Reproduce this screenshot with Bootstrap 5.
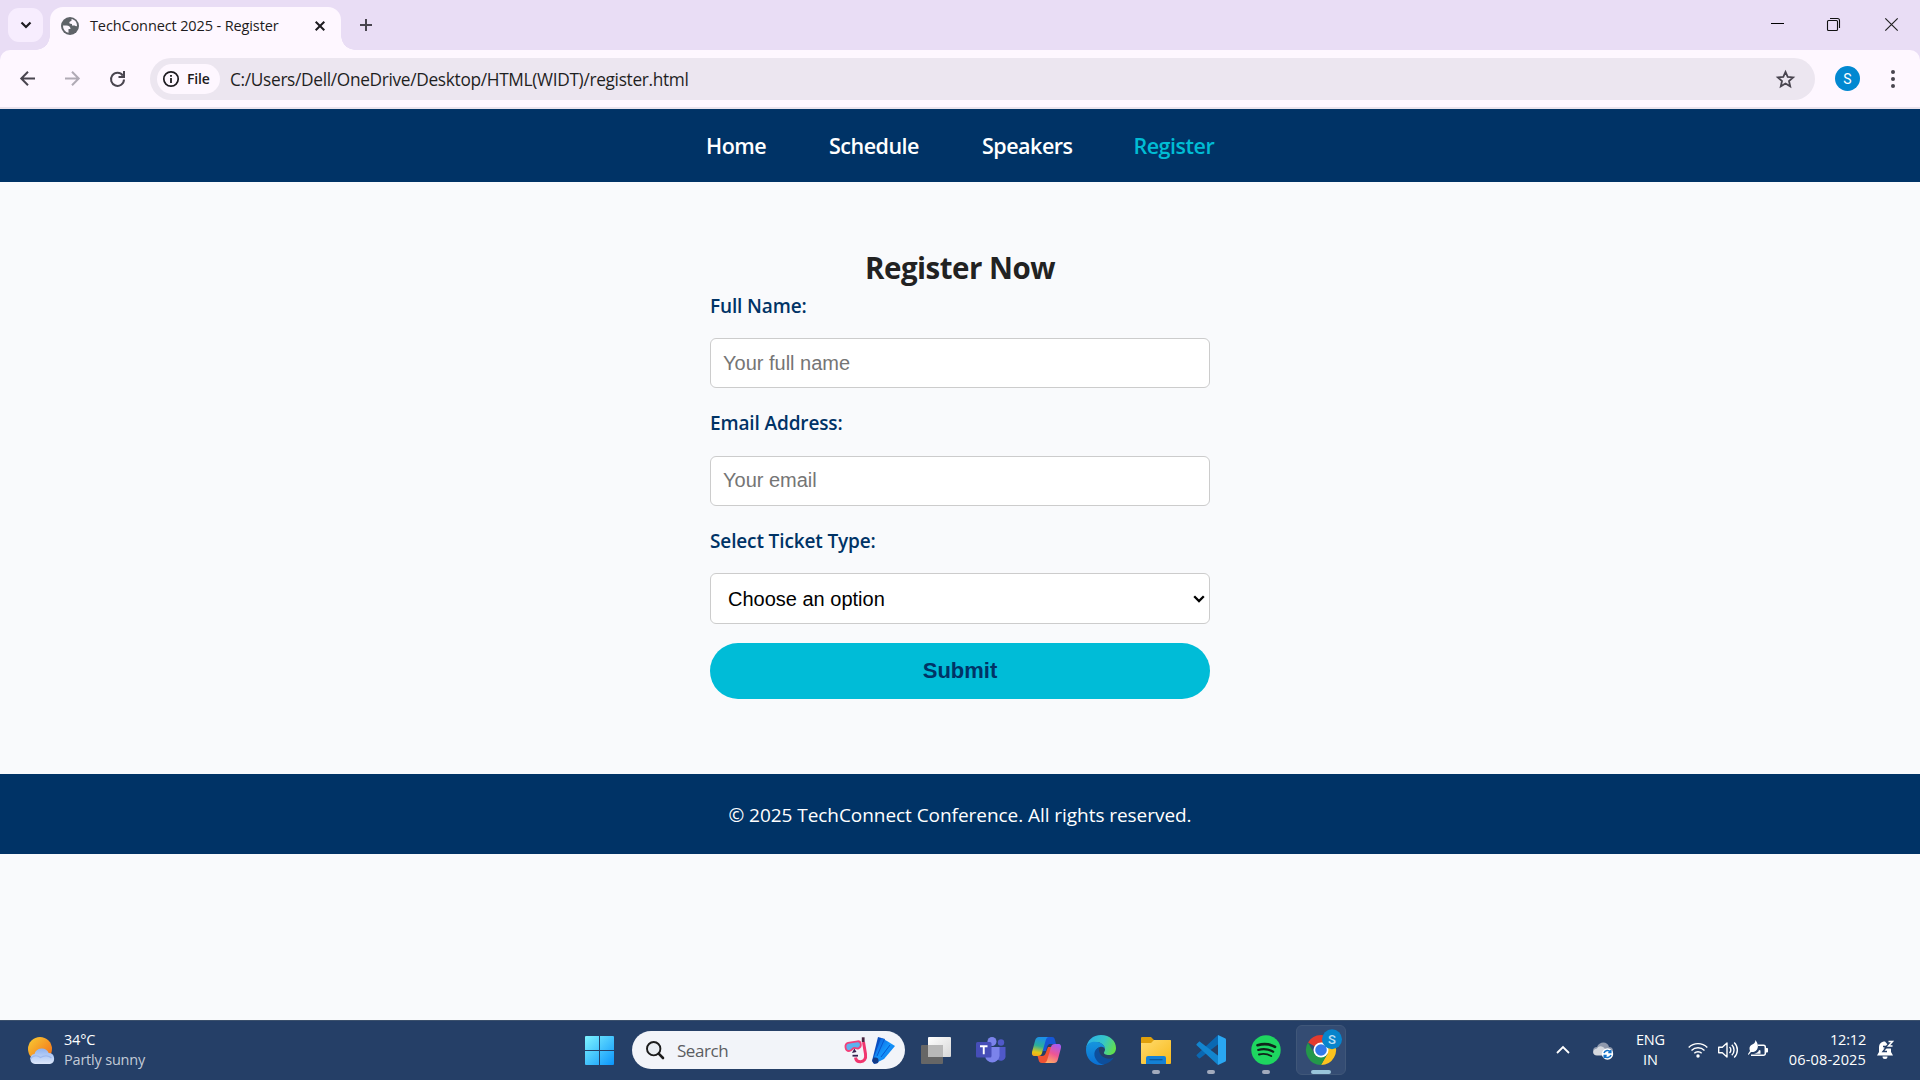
<!DOCTYPE html>
<html lang="en">
<head>
<meta charset="utf-8">
<title>TechConnect 2025 - Register</title>
<link href="https://cdn.jsdelivr.net/npm/bootstrap@5.3.0/dist/css/bootstrap.min.css" rel="stylesheet">
<style>
  html, body { height: 100%; overflow: hidden; }
  body { font-family: "Open Sans", "Noto Sans", sans-serif; background: #f9fafc; color: #222; width: 1920px; height: 1080px; }
  svg { display: block; flex: none; overflow: visible; }
  .fit { display: block; white-space: nowrap; flex: none; }

  /* browser frame */
  .tabstrip { height: 50px; background: #e9ddf5; }
  .tab-search { width: 35px; height: 34px; margin: 8px 0 0 8px; border-radius: 11px; background: #f7edfe; }
  .tab-active { width: 291px; height: 43px; margin: 7px 0 0 7px; padding: 0 16px 6px 11px; border-radius: 13px 13px 0 0; background: #fef7ff; position: relative; }
  .tab-active::before, .tab-active::after { content: ""; position: absolute; bottom: 0; width: 14px; height: 14px; }
  .tab-active::before { left: -14px; background: radial-gradient(circle at 0 0, transparent 13.5px, #fef7ff 14px); }
  .tab-active::after { right: -14px; background: radial-gradient(circle at 100% 0, transparent 13.5px, #fef7ff 14px); }
  .tab-title { font-size: 14.5px; letter-spacing: -.12px; color: #1d1b20; margin-left: 11px; }
  .new-tab { margin: 19px 0 0 19px; }
  .win-controls { margin: 18px 22px 0 auto; gap: 43px; }
  .toolbar-wrap { background: #e9ddf5; }
  .toolbar { height: 59px; background: #fef7ff; border-bottom: 2px solid #e9e2ec; border-radius: 10px 10px 0 0; padding: 0 22px 0 20px; }
  .tool-gap { margin-left: 30px; }
  .omnibox { width: 1665px; height: 42px; border-radius: 21px; background: #ece6f0; margin-left: 25px; padding: 0 20px 0 7px; }
  .chip { width: 63px; height: 30px; border-radius: 15px; background: #fef7ff; padding-left: 6px; gap: 8px; }
  .chip-text { font-size: 14px; font-weight: 600; letter-spacing: -.2px; color: #1d1b20; }
  .url { font-size: 17.3px; letter-spacing: -.32px; color: #1f1f1f; margin-left: 10px; padding-top: 2px; }
  .avatar { width: 25px; height: 25px; border-radius: 50%; background: #0288d1; color: #fff; font: 14px Roboto, sans-serif; margin-left: 20px; }
  .kebab { margin-right: 3.500px; }

  /* page */
  .site-nav { height: 73px; background: #003366; padding: 2px 0 0 706px; }
  .site-nav .fit { font-size: 21.5px; font-weight: 600; letter-spacing: -.5px; color: #fff; }
  .site-nav .current { color: #00bcd4; }
  .slot-1 { width: 123px; } .slot-2 { width: 153px; } .slot-3 { width: 151.500px; }
  .page-main { height: 592px; padding-top: 66px; }
  .title { font-size: 29.5px; line-height: 40px; font-weight: 700; letter-spacing: -.5px; color: #222; margin: 0; }
  .reg-form { width: 500px; margin-top: 3px; }
  .reg-form label { font-size: 19px; line-height: 30px; font-weight: 600; letter-spacing: -.13px; color: #003366; }
  .reg-form .form-control, .reg-form .form-select { font: 20px/23px "Liberation Sans", Arial, sans-serif; height: 50px; padding: 12px; border: 1px solid #ccc; border-radius: 6px; background-color: #fff; color: #000; }
  .reg-form .form-control::placeholder { color: #757575; }
  .reg-form .email-field { padding: 11px 12px 13px; }
  .reg-form .form-select { height: 51px; padding: 13px 17px 12px; background-image: url("data:image/svg+xml,%3Csvg xmlns='http://www.w3.org/2000/svg' viewBox='0 0 12 8'%3E%3Cpath d='M1.2 1.3 6 6.1l4.800-4.800' fill='none' stroke='%23000' stroke-width='2.300'/%3E%3C/svg%3E"); background-size: 12px 8px; background-position: right 4px top 21px; }
  .btn-submit { height: 56px; border: 0; border-radius: 28px; background: #00bcd7; color: #003366; font: bold 22px "Liberation Sans", Arial, sans-serif; }
  .f1 { margin-top: 17px; } .f1b { margin-top: 18px; } .f2 { margin-top: 20px; } .f3 { margin-top: 19px; }
  .site-footer { height: 80px; background: #003366; color: #fff; font-size: 19px; letter-spacing: -.05px; padding-top: 2px; }
  .blank { height: 166px; }

  /* taskbar */
  .taskbar { height: 60px; background: #253f67; border-top: 1px solid #3b506c; color: #fff; padding-bottom: 1px; }
  .taskbar .fit { font-size: 14.5px; line-height: 20px; letter-spacing: -.2px; }
  .weather { width: 573px; padding-left: 28px; gap: 9px; }
  .weather .muted { color: #c3cbd7; }
  .start { width: 59px; padding-left: 12px; }
  .search-pill { width: 273px; height: 38px; border-radius: 19px; background: #f2f4f9; padding: 0 10px 0 14px; }
  .search-pill .fit { font-size: 17px; letter-spacing: -.45px; color: #5b5d61; margin-left: 13px; padding-top: 2px; }
  .fins { margin-left: 4px; }
  .apps { margin-left: 3.500px; }
  .app-slot { width: 55px; height: 58px; position: relative; }
  .app-slot.open::after { content: ""; position: absolute; left: 23.500px; top: 49px; width: 8px; height: 4px; border-radius: 2px; background: #a2abbd; }
  .app-slot.focus::before { content: ""; position: absolute; left: 2.500px; top: 4px; width: 50px; height: 50px; border-radius: 6px; background: #344c73; border: 1px solid #405779; }
  .app-slot.focus::after { left: 17.500px; width: 20px; background: #99c5da; }
  .app-slot svg { position: relative; }
  .tray { margin-left: auto; padding-right: 26px; }
  .chev { margin-right: 23px; } .cloud { margin: 2px 23px 0 0; } .lang { margin-right: 23px; }
  .sig { margin-right: 10px; } .batt { margin: -3px 21px 0 0; } .clock { margin-right: 11px; }
  .taskbar .date { letter-spacing: .15px; }
</style>
<script src="https://cdn.jsdelivr.net/npm/bootstrap@5.3.0/dist/js/bootstrap.bundle.min.js"></script>
</head>
<body class="d-flex flex-column">

<div class="tabstrip d-flex align-items-start">
  <div class="tab-search d-flex align-items-center justify-content-center">
    <svg width="12" height="8" viewBox="0 0 12 8"><path d="M1.500 1.500 6 6l4.500-4.500" fill="none" stroke="#1d1b20" stroke-width="2.200"/></svg>
  </div>
  <div class="tab-active d-flex align-items-center">
    <svg width="18" height="18" viewBox="0 0 18 18"><circle cx="9" cy="9" r="9" fill="#5f6368"/><path fill="#fef7ff" d="M2 8.500h3.500c2.500 0 4 1.300 4 3.500H7.500v3.800A7 7 0 0 1 2 8.500zM10.500 2.100C14 2.800 16 5.500 16 8.700c-1.200 1.300-1.800-.2-3-.2H11V7C8.500 7 8 6 8.500 5c.4-1 2-.6 2-1.600z"/></svg>
    <span class="fit tab-title">TechConnect 2025 - Register</span>
    <svg class="ms-auto" width="10" height="10" viewBox="0 0 10 10"><path d="m.7.7 8.600 8.600M9.300.7.7 9.300" stroke="#1d1b20" stroke-width="2"/></svg>
  </div>
  <svg class="new-tab" width="12" height="12" viewBox="0 0 12 12"><path d="M6 0v12M0 6h12" stroke="#49454f" stroke-width="2"/></svg>
  <div class="win-controls d-flex">
    <svg width="13" height="13" viewBox="0 0 13 13"><path d="M0 5.500h13" stroke="#000"/></svg>
    <svg width="13" height="13" viewBox="0 0 13 13"><rect x=".5" y="2.500" width="10" height="10" rx="1" fill="none" stroke="#111" stroke-width="1.100"/><path d="M3 .5h7.500a2 2 0 0 1 2 2V10" fill="none" stroke="#111" stroke-width="1.100"/></svg>
    <svg width="15" height="13" viewBox="-2 0 15 13"><path d="m.3.3 12.400 12.400M12.700.3.3 12.700" stroke="#222" stroke-width="1.200"/></svg>
  </div>
</div>

<div class="toolbar-wrap">
  <div class="toolbar d-flex align-items-center">
    <svg width="15" height="15" viewBox="0 0 15 15"><path d="M15 7.500H1.500M8 .8 1.300 7.500 8 14.200" fill="none" stroke="#49454f" stroke-width="2"/></svg>
    <svg class="tool-gap" width="15" height="15" viewBox="0 0 15 15"><path d="M0 7.500h13.500M7 .8l6.700 6.700L7 14.200" fill="none" stroke="#b0abb5" stroke-width="2"/></svg>
    <svg class="tool-gap" width="15" height="15" viewBox="0 0 15 15"><path d="M12.800 4.600A6.500 6.500 0 1 0 14 8.500" fill="none" stroke="#49454f" stroke-width="2"/><path d="M14 0v6H8.500" fill="none" stroke="#49454f" stroke-width="2"/></svg>
    <div class="omnibox d-flex align-items-center">
      <div class="chip d-flex align-items-center">
        <svg width="16" height="16" viewBox="0 0 16 16"><circle cx="8" cy="8" r="7.200" fill="none" stroke="#1d1b20" stroke-width="1.700"/><path d="M8 7v5M8 4v1.800" stroke="#1d1b20" stroke-width="1.800"/></svg>
        <span class="fit chip-text">File</span>
      </div>
      <span class="fit url">C:/Users/Dell/OneDrive/Desktop/HTML(WIDT)/register.html</span>
      <svg class="ms-auto" width="19" height="18" viewBox="0 0 19 18"><path d="m9.500 1.900 2.200 5 5.400.5-4.100 3.600 1.200 5.300-4.700-2.800-4.700 2.800L6 11 1.900 7.400l5.400-.5z" fill="none" stroke="#49454f" stroke-width="1.800"/></svg>
    </div>
    <div class="avatar d-flex align-items-center justify-content-center">S</div>
    <svg class="ms-auto kebab" width="4" height="18" viewBox="0 0 4 18"><g fill="#49454f"><circle cx="2" cy="2" r="2"/><circle cx="2" cy="9" r="2"/><circle cx="2" cy="16" r="2"/></g></svg>
  </div>
</div>

<nav class="site-nav d-flex align-items-center">
  <div class="slot-1"><a class="fit text-decoration-none">Home</a></div>
  <div class="slot-2"><a class="fit text-decoration-none">Schedule</a></div>
  <div class="slot-3"><a class="fit text-decoration-none">Speakers</a></div>
  <a class="fit text-decoration-none current">Register</a>
</nav>

<main class="page-main d-flex flex-column align-items-center">
  <h2 class="title"><span class="fit">Register Now</span></h2>
  <form class="reg-form d-flex flex-column">
    <label class="d-flex" for="n"><span class="fit">Full Name:</span></label>
    <input id="n" class="form-control f1" placeholder="Your full name">
    <label class="d-flex f2" for="e"><span class="fit">Email Address:</span></label>
    <input id="e" class="form-control email-field f1b" placeholder="Your email">
    <label class="d-flex f2" for="t"><span class="fit">Select Ticket Type:</span></label>
    <select id="t" class="form-select f1"><option>Choose an option</option></select>
    <button type="button" class="btn-submit f3">Submit</button>
  </form>
</main>

<footer class="site-footer d-flex align-items-center justify-content-center"><span class="fit">© 2025 TechConnect Conference. All rights reserved.</span></footer>
<div class="blank"></div>

<div class="taskbar d-flex align-items-center">
  <div class="weather d-flex align-items-center">
    <svg width="27" height="27" viewBox="0 0 27 27">
      <defs><linearGradient id="sun" x1="0" y1="0" x2="1" y2="1"><stop offset=".1" stop-color="#f7c331"/><stop offset=".8" stop-color="#f47b1c"/></linearGradient><linearGradient id="cl" x1="0" y1="0" x2="0" y2="1"><stop offset="0" stop-color="#8fb2f0"/><stop offset="1" stop-color="#dde8fb"/></linearGradient></defs>
      <circle cx="12" cy="12" r="12" fill="url(#sun)"/>
      <path d="M7 27a5 5 0 0 1-.5-9.900A7.500 7.500 0 0 1 20.700 16 5.600 5.600 0 0 1 22 27z" fill="url(#cl)"/>
      <path d="M2.500 22c2-4 7-4 10-1.500 4-3 9-1.500 11 .5" fill="none" stroke="#9db9ee" stroke-width="1.200"/>
    </svg>
    <div><span class="fit">34°C</span><span class="fit muted">Partly sunny</span></div>
  </div>
  <div class="start">
    <svg width="29" height="29" viewBox="0 0 29 29"><defs><linearGradient id="win" gradientUnits="userSpaceOnUse" x1="0" y1="0" x2="29" y2="29"><stop offset="0" stop-color="#7ef3ff"/><stop offset="1" stop-color="#0b95fb"/></linearGradient></defs><path fill="url(#win)" d="M1 0h13v14H0V1a1 1 0 0 1 1-1zM15 0h13a1 1 0 0 1 1 1v13H15zM0 15h14v14H1a1 1 0 0 1-1-1zM15 15h14v13a1 1 0 0 1-1 1H15z"/></svg>
  </div>
  <div class="search-pill d-flex align-items-center">
    <svg width="18" height="18" viewBox="0 0 18 18"><circle cx="7.700" cy="7.700" r="6.700" fill="#e9edf2" stroke="#1c1c1c" stroke-width="1.900"/><path d="m12.700 12.700 4.300 4.300" stroke="#1c1c1c" stroke-width="2.600" stroke-linecap="round"/></svg>
    <span class="fit">Search</span>
    <svg class="ms-auto" width="24" height="27" viewBox="0 0 24 27"><path d="M19.500 5 21.500 17c.8 5-1.500 7.700-5 7.700-3 0-4.700-1.700-5-4.200" fill="none" stroke="#f0366f" stroke-width="3"/><path d="M19.200 .3v4.700" stroke="#4b2440" stroke-width="2.800"/><path d="M4 5.800 13.500 4.300c4-.4 4.500 5.700 1 7-2 .7-3-.6-4.500-.4C8.300 11.200 8 14 5 14 1 14 0 7 4 5.800z" fill="#5fb2ee" stroke="#f2407a" stroke-width="1.800"/><path d="m8 16 2.300-4.500L12.500 15z" fill="#372050"/><path d="M8.500 18.700h5.500" stroke="#372050" stroke-width="1.800"/></svg>
    <svg class="fins" width="23" height="27" viewBox="0 0 23 27"><defs><linearGradient id="fin" x1="0" y1="0" x2="1" y2="1"><stop offset="0" stop-color="#0a56d8"/><stop offset=".5" stop-color="#1595fa"/><stop offset="1" stop-color="#0873ea"/></linearGradient></defs><path fill="#0a4fc0" d="M6 0l7 2-7 24-4 1-2-3z"/><path fill="url(#fin)" d="M9 1l6 3 8 5-11 13-6 3-4-5z"/><path d="M12 3 5 19M18 8 9 20" stroke="#0757cf" stroke-width="1" fill="none"/><circle cx="3.500" cy="23.500" r="3" fill="#123a86"/></svg>
  </div>

  <div class="apps d-flex">
    <div class="app-slot d-flex align-items-center justify-content-center"><svg width="30" height="27" viewBox="0 0 30 27"><defs><linearGradient id="tv" x1="0" y1="0" x2="1" y2="1"><stop offset="0" stop-color="#fff"/><stop offset="1" stop-color="#d7d7d7"/></linearGradient></defs><rect x="0" y="8" width="22" height="19" rx="1" fill="#666"/><rect x="7" y="0" width="23" height="20" rx="1" fill="url(#tv)"/><path d="M7 8h15v12H7z" fill="#b8b8b8"/></svg></div>
    <div class="app-slot d-flex align-items-center justify-content-center"><svg width="30" height="27" viewBox="0 0 30 27"><circle cx="25" cy="5.500" r="3.200" fill="#5059c9"/><path d="M20 10h9.500v8a4.800 4.800 0 0 1-9.500 2z" fill="#5059c9"/><circle cx="16" cy="4.500" r="4.500" fill="#7b83eb"/><path d="M9 10h14.500v9a7.300 7.300 0 0 1-14.500 0z" fill="#7b83eb"/><rect y="5" width="15.500" height="15.500" rx="1.500" fill="#464eb8"/><path d="M4 9.300h7.500M7.750 9.300v8" stroke="#fff" stroke-width="1.900"/></svg></div>
    <div class="app-slot d-flex align-items-center justify-content-center"><svg width="29" height="26" viewBox="0 0 29 26"><defs><linearGradient id="c1" x1=".4" y1="0" x2=".2" y2="1"><stop offset="0" stop-color="#1c8fe8"/><stop offset=".45" stop-color="#2bb09a"/><stop offset=".8" stop-color="#e6c917"/><stop offset="1" stop-color="#f5a41c"/></linearGradient><linearGradient id="c2" x1=".7" y1="0" x2=".3" y2="1"><stop offset="0" stop-color="#a65bf0"/><stop offset=".5" stop-color="#ee5594"/><stop offset="1" stop-color="#ffab66"/></linearGradient></defs><path d="M8 0h12c2 0 2.500 1 3 3l1 4h-5c-2 0-3 .5-4 3l-1 4H11z" fill="#1657d6"/><path d="M21 26H10c-2.500 0-3-1.500-3.500-3.500L5.500 19H10c2 0 3-1 3.700-3L16 10h4z" fill="#ef5233"/><path d="M7 0h10c-2 0-3 2-3.500 4L10 16c-.6 2-1.500 3-4 3H3c-3 0-3.500-2-2.700-5L3 4c.8-3 2-4 4-4z" fill="url(#c1)"/><path d="M22 26H12c2 0 3-2 3.500-4L19 10c.6-2 1.500-3 4-3h3c3 0 3.500 2 2.700 5L26 22c-.8 3-2 4-4 4z" fill="url(#c2)"/></svg></div>
    <div class="app-slot d-flex align-items-center justify-content-center"><svg width="30" height="30" viewBox="0 0 30 30"><defs><linearGradient id="e1" x1="0" y1=".3" x2="1" y2=".6"><stop offset="0" stop-color="#2ab0e8"/><stop offset=".55" stop-color="#36c6c8"/><stop offset="1" stop-color="#63e04a"/></linearGradient><linearGradient id="e2" x1="0" y1="0" x2="0" y2="1"><stop offset="0" stop-color="#1695dd"/><stop offset="1" stop-color="#0a6fd4"/></linearGradient></defs><path d="M0 14C1 5 7 0 15 0c9 0 15 6 15 13 0 4.500-3 7-7 7-3.500 0-5.500-1.200-5-2.500.3-1 1-1.500 1-3C19 10 14 6.500 9.500 7 4 7.500 1 10 0 14z" fill="url(#e1)"/><path d="M0 15C0 9 4 6.800 9 6.800c5.500 0 10 3.500 10 7.200-1-2-3-2.500-5-2-4 1.200-5 5-4.500 8 .8 5 5 9 9 9.300-1 .5-2.500.7-4 .7C6 30 0 23 0 15z" fill="url(#e2)"/><path d="M13 12.500c-5 2-5.500 7-3.500 11 2 4.500 6 6.300 9 5.800 4-.8 7.500-3.500 9.300-6.800-3 1.500-6 1.500-8.500.5-4-1.500-7-5-6.300-10.500z" fill="#0e4f9c"/></svg></div>
    <div class="app-slot open d-flex align-items-center justify-content-center"><svg width="30" height="27" viewBox="0 0 30 27"><defs><linearGradient id="fo" x1="0" y1="0" x2="1" y2="1"><stop offset="0" stop-color="#ffdb6e"/><stop offset="1" stop-color="#f8b91a"/></linearGradient></defs><path d="M0 1a1 1 0 0 1 1-1h9l3 3h16a1 1 0 0 1 1 1v6H0z" fill="#dfa00c"/><path d="M0 6h10l3-3h16a1 1 0 0 1 1 1v22a1 1 0 0 1-1 1H1a1 1 0 0 1-1-1z" fill="url(#fo)"/><path d="M5 27v-6a2 2 0 0 1 2-2h16a2 2 0 0 1 2 2v6z" fill="#1481d6"/><path d="M8.500 22.700h13" stroke="#0b5697" stroke-width="1.200"/></svg></div>
    <div class="app-slot open d-flex align-items-center justify-content-center"><svg width="30" height="30" viewBox="0 0 30 30"><path d="M22 0 1 19.500c-.7.700-.7 1.200 0 1.800L2.700 23c.5.500 1 .5 1.600.1L22.500 9z" fill="#0a68b2"/><path d="M22 30 .9 10.500c-.7-.7-.7-1.200 0-1.800L2.700 7c.5-.5 1-.5 1.600-.1L22.500 21z" fill="#1285cf"/><path d="M22 0l7 3.300c.7.300 1 .8 1 1.500v20.400c0 .7-.3 1.200-1 1.500L22 30z" fill="#2aa7f2"/></svg></div>
    <div class="app-slot open d-flex align-items-center justify-content-center"><svg width="30" height="30" viewBox="0 0 30 30"><circle cx="15" cy="15" r="14.700" fill="#1ed760"/><g fill="none" stroke="#10241a" stroke-linecap="round"><path d="M6.500 10.200c6-1.700 12.500-1.200 17.500 1.700" stroke-width="2.700"/><path d="M7.200 15c5-1.400 10.500-.8 15 1.700" stroke-width="2.200"/><path d="M8 19.500c4.300-1.100 8.500-.6 12.200 1.500" stroke-width="1.900"/></g></svg></div>
    <div class="app-slot open focus d-flex align-items-center justify-content-center"><svg width="30" height="30" viewBox="0 0 30 30"><path d="M15 15 2 7.500A15 15 0 0 1 28 7.500z" fill="#e33b2e"/><path d="M28 7.500A15 15 0 0 1 15 30l6.500-11.200L15 7.500z" fill="#fcc31e"/><path d="M2 7.500A15 15 0 0 0 15 30l6.500-11.200-13 0z" fill="#23984a"/><circle cx="15" cy="15" r="7.500" fill="#fff"/><circle cx="15" cy="15" r="5.800" fill="#3279ea"/><circle cx="26" cy="4.300" r="10" fill="#0784cc"/><text x="26" y="9" text-anchor="middle" font-family="Roboto" font-weight="500" font-size="13" fill="#bfe0f5">S</text></svg></div>
  </div>

  <div class="tray d-flex align-items-center">
    <svg class="chev" width="14" height="8" viewBox="0 0 14 8"><path d="m1 7 6-6 6 6" fill="none" stroke="#fff" stroke-width="1.800"/></svg>
    <svg class="cloud" width="20" height="18" viewBox="0 0 20 18"><path d="M4 13a4 4 0 0 1 0-8c2-6 11-6 12 0a4 4 0 0 1 0 8z" fill="#8f99ad"/><path d="M4 13.500C-1 13.500-1 7 4 6.500 6 3 10 4 12 7l3 6.500z" fill="#d5d8de"/><circle cx="14.500" cy="12" r="5.700" fill="#fff"/><g fill="none" stroke="#1272c8" stroke-width="1.500"><path d="M11 11a3.700 3.700 0 0 1 6.500-1M18 13a3.700 3.700 0 0 1-6.500 1M17.800 8v2.500h-2.500M11.200 16v-2.500h2.500"/></g></svg>
    <div class="lang d-flex flex-column align-items-center"><span class="fit">ENG</span><span class="fit">IN</span></div>
    <svg class="sig" width="20" height="16" viewBox="0 0 20 16"><g fill="none" stroke="#fff" stroke-width="1.400"><path d="M.7 5.500a13 13 0 0 1 18.600 0M3.500 8.500a9.200 9.200 0 0 1 13 0M6.300 11.300a5.200 5.200 0 0 1 7.400 0"/></g><circle cx="10" cy="14" r="1.700" fill="#fff"/></svg>
    <svg class="sig" width="20" height="18" viewBox="0 0 20 18"><g fill="none" stroke="#fff" stroke-width="1.400"><path d="M.7 6.200h3.600L9 2v14l-4.700-4.200H.7z" stroke-linejoin="round"/><path d="M11.500 6a4 4 0 0 1 0 6M13.800 3.700a7.400 7.400 0 0 1 0 10.600M16.200 1.500a10.500 10.500 0 0 1 0 15"/></g></svg>
    <svg class="batt" width="20" height="17" viewBox="0 0 20 17"><path d="M10 5.200h5.500a1.800 1.800 0 0 1 1.800 1.800v6.500a1.800 1.800 0 0 1-1.800 1.800H3" fill="none" stroke="#fff" stroke-width="1.500"/><path d="M18 8h1.200a.8.800 0 0 1 .8.800v3a.8.800 0 0 1-.8.800H18zM6 13.800h6.500V10.500L11 10c-.5 2-2.500 3.500-5 3.800z" fill="#fff"/><path d="M7.500 0C9.500 3 11 6 9 9.500c-1.500 2.300-4 2.800-6 2.500L.5 15l-.5-1 2-3C0 6 4 4.500 6 3.500 7 2.800 7.300 1.500 7.500 0z" fill="#fff"/></svg>
    <div class="clock d-flex flex-column align-items-end"><span class="fit">12:12</span><span class="fit date">06-08-2025</span></div>
    <svg width="17" height="20" viewBox="0 0 17 20"><path d="M8 1.500c-4 0-6 2.500-6 6V12l-2 3.500h16L14 12V8.500zM5.500 16.500h5a2.500 2.500 0 0 1-5 0z" fill="#fff"/><path d="M6 6.500h4l-4 5h4" fill="none" stroke="#253f67" stroke-width="1.400"/><path d="M11 1h5l-5 5.500h5" fill="none" stroke="#253f67" stroke-width="4"/><path d="M11.500 1.500h4l-4 4.500h4" fill="none" stroke="#fff" stroke-width="1.500"/></svg>
  </div>
</div>
</body>
</html>
